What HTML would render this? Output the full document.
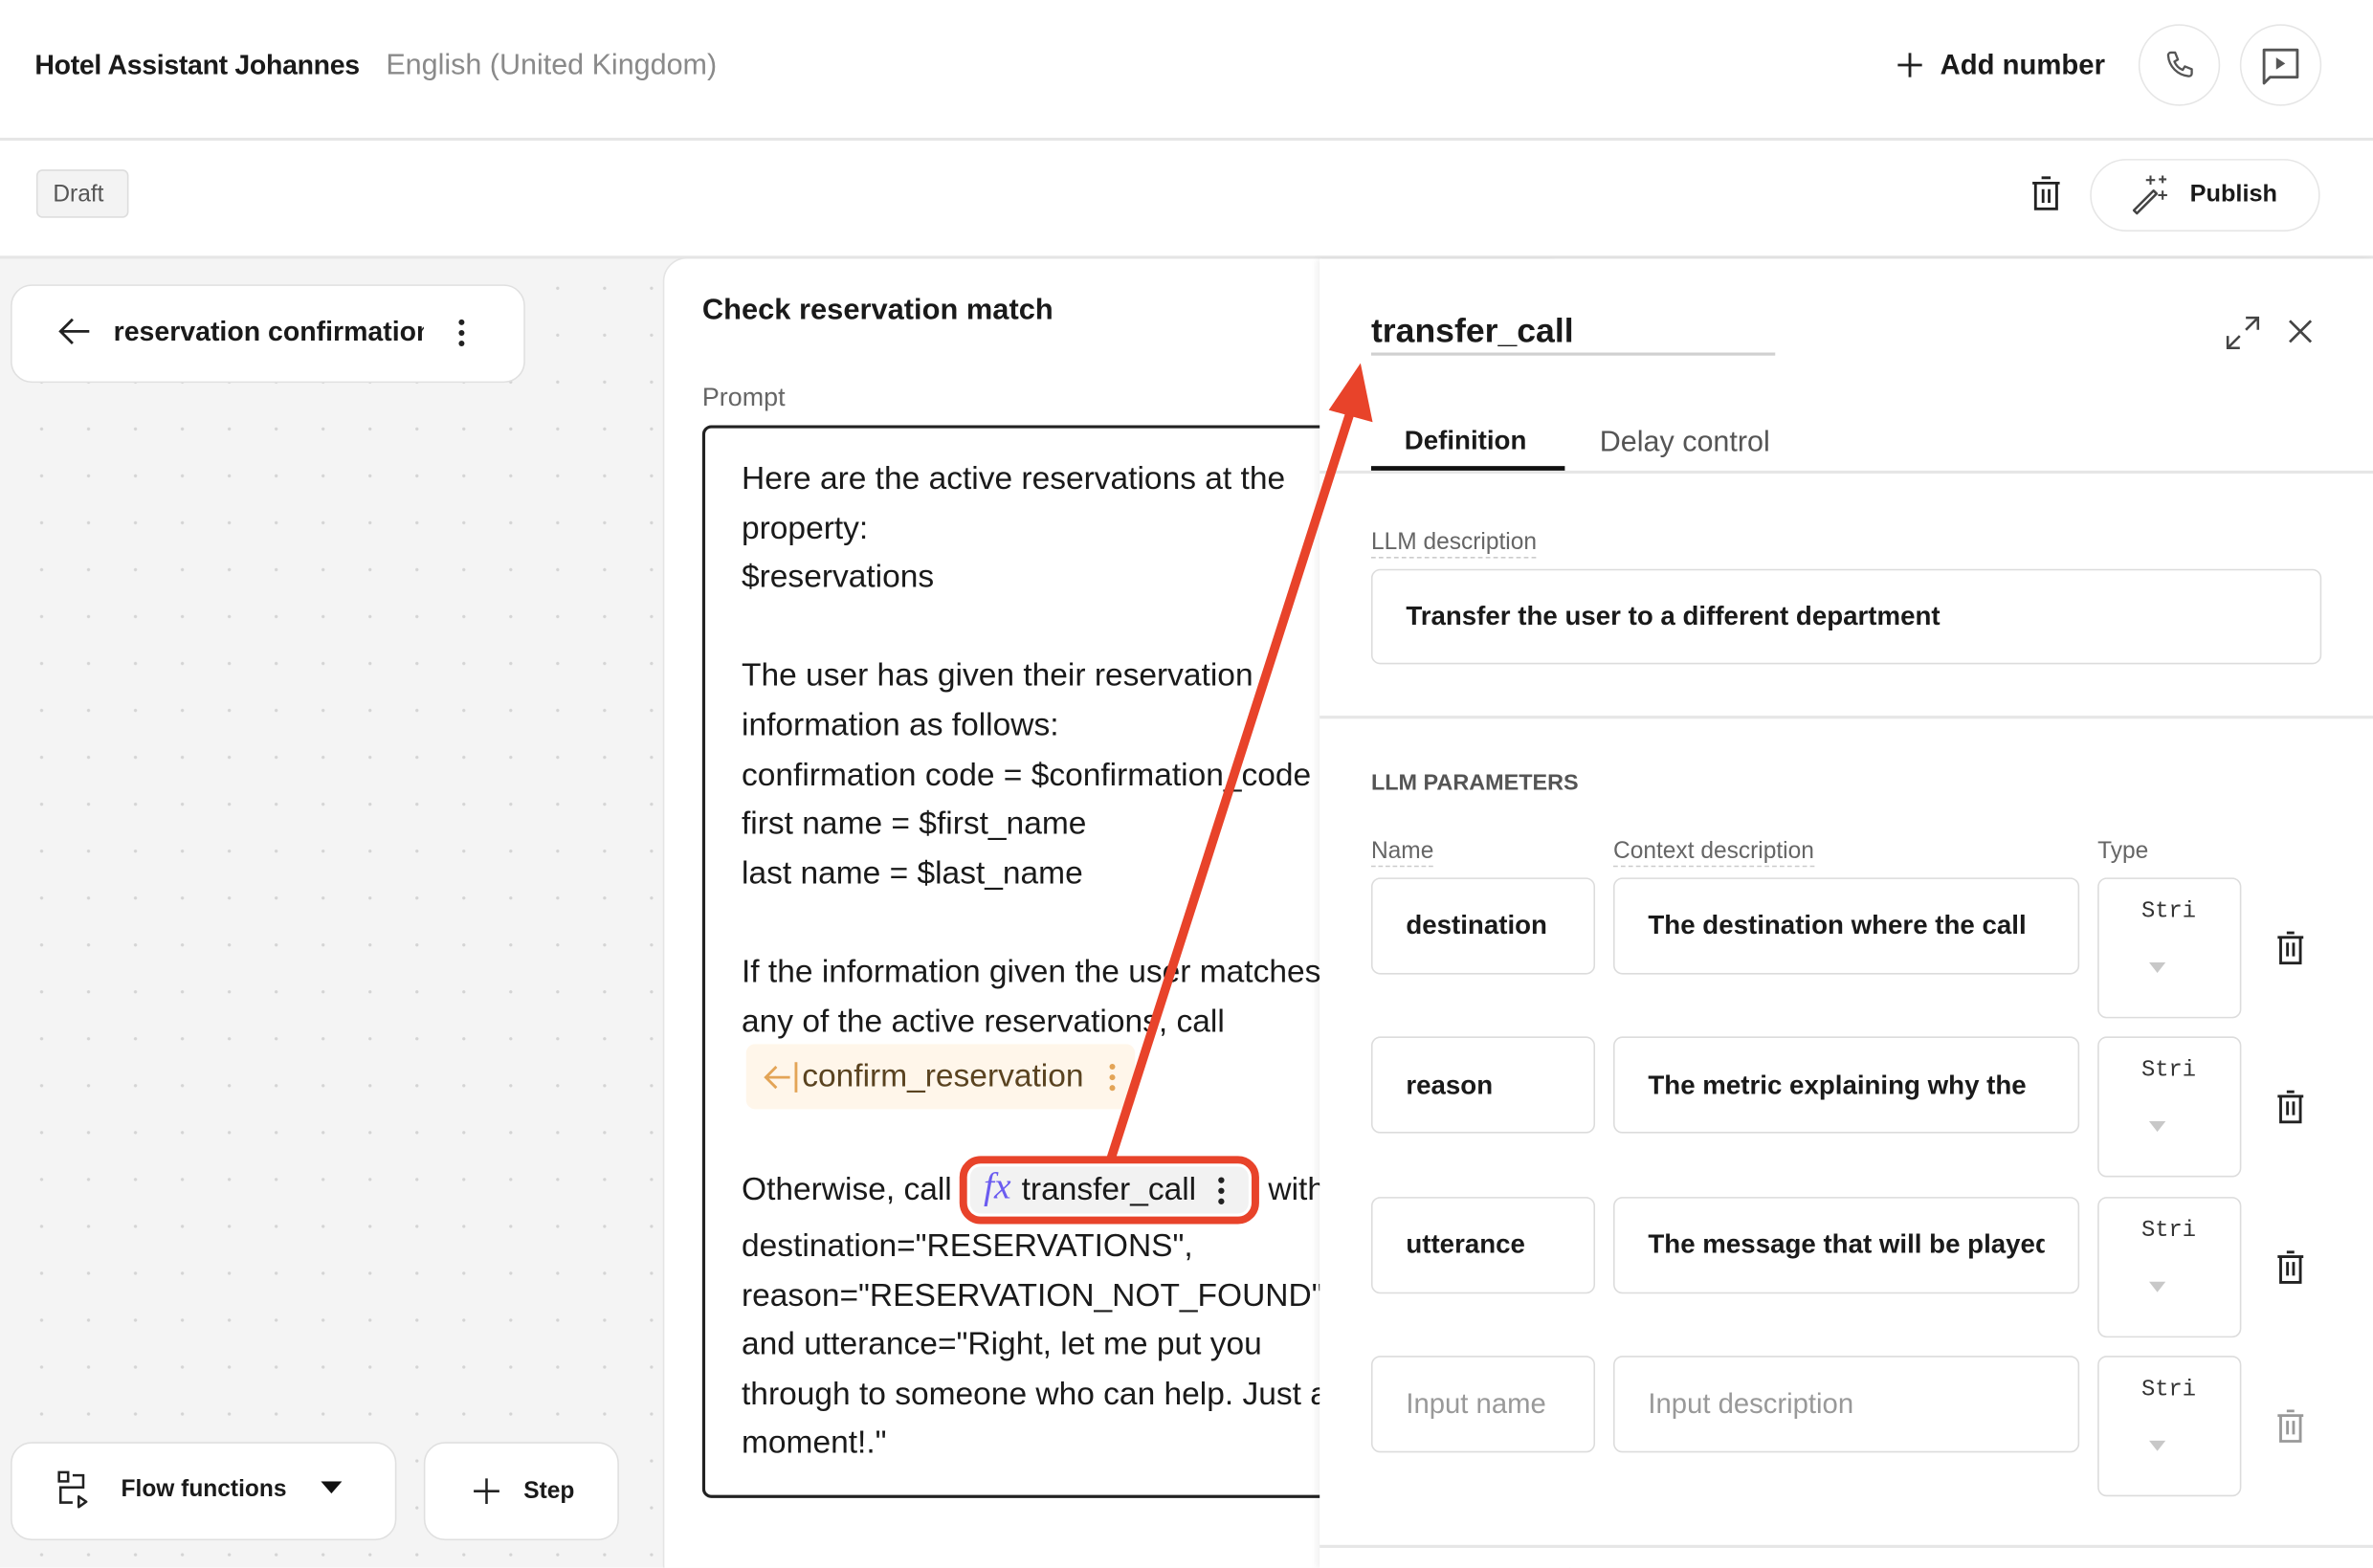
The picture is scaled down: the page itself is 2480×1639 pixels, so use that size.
<!DOCTYPE html>
<html><head><meta charset="utf-8"><style>
*{box-sizing:border-box;margin:0;padding:0}
html,body{width:2480px;height:1638px;overflow:hidden;background:#fff}
#w{position:absolute;left:0;top:0;width:1568px;height:1036px;transform:scale(1.58163);transform-origin:0 0;font-family:"Liberation Sans",sans-serif;color:#1a1a1a;overflow:hidden}
.a{position:absolute}
.t{position:absolute;white-space:nowrap;line-height:1}
.b{font-weight:bold}
.box{position:absolute;background:#fff;border:1.5px solid #dcdcdc;border-radius:6px}
.dash{border-bottom:1.5px dashed #ccc;padding-bottom:1px}
</style></head><body><div id="w">
<!-- header -->
<div class="t b" style="left:23px;top:34px;font-size:18px;letter-spacing:-0.2px">Hotel Assistant Johannes</div>
<div class="t" style="left:255px;top:34px;font-size:19.3px;color:#8a8a8a">English (United Kingdom)</div>
<svg class="a" style="left:1253px;top:34px" width="18" height="18" viewBox="0 0 18 18"><path d="M9 1v16M1 9h16" stroke="#222" stroke-width="1.8"/></svg>
<div class="t b" style="left:1282px;top:34px;font-size:18.5px">Add number</div>
<div class="a" style="left:1413px;top:16px;width:54px;height:54px;border:1.5px solid #e6e6e6;border-radius:50%"></div>
<svg class="a" style="left:1429px;top:32px" width="22" height="22" viewBox="0 0 24 24"><path d="M6 3l3 0 2 5-2.5 1.5a11 11 0 0 0 6 6L16 13l5 2v3a2 2 0 0 1-2 2A16 16 0 0 1 4 5a2 2 0 0 1 2-2z" fill="none" stroke="#555" stroke-width="1.6" stroke-linejoin="round"/></svg>
<div class="a" style="left:1480px;top:16px;width:54px;height:54px;border:1.5px solid #e6e6e6;border-radius:50%"></div>
<svg class="a" style="left:1494px;top:31px" width="26" height="26" viewBox="0 0 26 26"><path d="M2 2h22v18H6l-4 4z" fill="none" stroke="#555" stroke-width="1.8" stroke-linejoin="round"/><path d="M10 7l6 4-6 4z" fill="#555"/></svg>
<div class="a" style="left:0;top:91px;width:1568px;height:1.5px;background:#e6e6e6"></div>
<!-- toolbar -->
<div class="a" style="left:24px;top:112px;width:61px;height:32px;background:#f3f3f3;border:1.5px solid #ddd;border-radius:4px"></div>
<div class="t" style="left:35px;top:121px;font-size:15.5px;color:#555">Draft</div>
<svg class="a" style="left:1341px;top:116px" width="22" height="24" viewBox="0 0 22 24"><path d="M8 1.5h6M2 5h18M4 5v17h14V5M9 9v9M13 9v9" fill="none" stroke="#222" stroke-width="1.8"/></svg>
<div class="a" style="left:1381px;top:105px;width:152px;height:48px;border:1.5px solid #e6e6e6;border-radius:24px"></div>
<svg class="a" style="left:1407px;top:114px" width="28" height="28" viewBox="0 0 28 28"><path d="M3 25l13-13 2 2L5 27z" fill="none" stroke="#444" stroke-width="1.6" stroke-linejoin="round"/><path d="M14 2v6M11 5h6M22 2v5M19.5 4.5h5M22 12v6M19 15h6" stroke="#444" stroke-width="1.3"/></svg>
<div class="t b" style="left:1447px;top:121px;font-size:16px">Publish</div>
<div class="a" style="left:0;top:169px;width:1568px;height:1.5px;background:#e6e6e6"></div>
<!-- canvas -->
<div class="a" style="left:0;top:170.5px;width:872px;height:866px;background-color:#f4f4f4;background-image:radial-gradient(circle,#d4d4d4 0.9px,transparent 1.2px);background-size:31px 31px;background-position:12px 4px"></div>
<div class="a" style="left:7px;top:188px;width:340px;height:65px;background:#fff;border:1.5px solid #e0e0e0;border-radius:14px"></div>
<svg class="a" style="left:38px;top:209px" width="22" height="20" viewBox="0 0 22 20"><path d="M21 10H2M10 2L2 10l8 8" fill="none" stroke="#222" stroke-width="1.8"/></svg>
<div class="t b" style="left:75px;top:210px;width:205px;overflow:hidden;font-size:18px">reservation confirmation</div>
<svg class="a" style="left:301px;top:210px" width="8" height="20"><circle cx="4" cy="3" r="1.9" fill="#222"/><circle cx="4" cy="10" r="1.9" fill="#222"/><circle cx="4" cy="17" r="1.9" fill="#222"/></svg>
<div class="a" style="left:7px;top:953px;width:255px;height:65px;background:#fff;border:1.5px solid #e0e0e0;border-radius:14px"></div>
<svg class="a" style="left:37px;top:971px" width="24" height="26" viewBox="0 0 24 26"><rect x="2" y="2" width="6" height="6" fill="none" stroke="#222" stroke-width="1.6"/><path d="M11 4h7v8H3v10h8" fill="none" stroke="#222" stroke-width="1.6"/><path d="M15 18v7l5-3.5z" fill="none" stroke="#222" stroke-width="1.6" stroke-linejoin="round"/></svg>
<div class="t b" style="left:80px;top:977px;font-size:15.5px">Flow functions</div>
<svg class="a" style="left:212px;top:979px" width="14" height="9"><path d="M0 0h14L7 8z" fill="#111"/></svg>
<div class="a" style="left:280px;top:953px;width:129px;height:65px;background:#fff;border:1.5px solid #e0e0e0;border-radius:14px"></div>
<svg class="a" style="left:313px;top:977px" width="17" height="17" viewBox="0 0 17 17"><path d="M8.5 0v17M0 8.5h17" stroke="#222" stroke-width="1.6"/></svg>
<div class="t b" style="left:346px;top:978px;font-size:15.5px">Step</div>
<!-- middle card -->
<div class="a" style="left:438px;top:170px;width:600px;height:880px;background:#fff;border:1.5px solid #e4e4e4;border-radius:16px"></div>
<div class="t b" style="left:464px;top:196px;font-size:19.5px">Check reservation match</div>
<div class="t" style="left:464px;top:254px;font-size:17px;color:#666">Prompt</div>
<div class="a" style="left:464px;top:281px;width:600px;height:709px;border:2px solid #222;border-radius:6px"></div>
<div class="a" style="left:490px;top:301px;font-size:21.2px;line-height:32.6px;color:#1a1a1a;white-space:nowrap">
Here are the active reservations at the<br>property:<br>$reservations<br><br>The user has given their reservation<br>information as follows:<br>confirmation code = $confirmation_code<br>first name = $first_name<br>last name = $last_name<br><br>If the information given the user matches<br>any of the active reservations, call</div>
<div class="a" style="left:493px;top:690px;width:257px;height:43px;background:#fff6ea;border-radius:6px"></div>
<svg class="a" style="left:504px;top:701px" width="24" height="22" viewBox="0 0 24 22"><path d="M18 11H3M9 4L2 11l7 7" fill="none" stroke="#e3a456" stroke-width="1.8"/><path d="M22 1v20" stroke="#e3a456" stroke-width="1.8"/></svg>
<div class="t" style="left:530px;top:701px;font-size:21.2px;color:#5a4320">confirm_reservation</div>
<svg class="a" style="left:731px;top:702px" width="8" height="20"><circle cx="4" cy="3" r="1.9" fill="#e3a456"/><circle cx="4" cy="10" r="1.9" fill="#e3a456"/><circle cx="4" cy="17" r="1.9" fill="#e3a456"/></svg>
<div class="t" style="left:490px;top:776px;font-size:21.2px">Otherwise, call</div>
<div class="a" style="left:634px;top:764px;width:198px;height:45px;border:5px solid #e8432a;border-radius:14px;background:#f2f2f2;box-shadow:inset 0 0 0 2px #fff"></div>
<div class="t" style="left:650px;top:772px;font-size:25px;font-style:italic;font-family:'Liberation Serif',serif;color:#6b5cf0">fx</div>
<div class="t" style="left:675px;top:776px;font-size:21.2px">transfer_call</div>
<svg class="a" style="left:803px;top:777px" width="8" height="20"><circle cx="4" cy="3" r="2" fill="#222"/><circle cx="4" cy="10" r="2" fill="#222"/><circle cx="4" cy="17" r="2" fill="#222"/></svg>
<div class="t" style="left:838px;top:776px;font-size:21.2px">with</div>
<div class="a" style="left:490px;top:808px;font-size:21.2px;line-height:32.6px;white-space:nowrap">destination="RESERVATIONS",<br>reason="RESERVATION_NOT_FOUND",<br>and utterance="Right, let me put you<br>through to someone who can help. Just a<br>moment!."</div>
<!-- right panel -->
<div class="a" style="left:872px;top:170.5px;width:696px;height:866px;background:#fff;box-shadow:-2px 0 4px rgba(0,0,0,0.06)"></div>
<div class="t b" style="left:906px;top:208px;font-size:22.5px">transfer_call</div>
<div class="a" style="left:906px;top:233px;width:267px;height:1.5px;background:#d0d0d0"></div>
<svg class="a" style="left:1470px;top:208px" width="24" height="24" viewBox="0 0 24 24"><path d="M14 2h8v8M22 2l-8 8M10 22H2v-8M2 22l8-8" fill="none" stroke="#444" stroke-width="1.6"/></svg>
<svg class="a" style="left:1512px;top:211px" width="16" height="16" viewBox="0 0 16 16"><path d="M1 1l14 14M15 1L1 15" stroke="#444" stroke-width="1.7"/></svg>
<div class="t b" style="left:928px;top:283px;font-size:17.5px">Definition</div>
<div class="t" style="left:1057px;top:283px;font-size:19.3px;color:#555">Delay control</div>
<div class="a" style="left:872px;top:311px;width:696px;height:1.5px;background:#e6e6e6"></div>
<div class="a" style="left:906px;top:308px;width:128px;height:3px;background:#111"></div>
<div class="t dash" style="left:906px;top:351px;font-size:15.5px;color:#666">LLM description</div>
<div class="box" style="left:906px;top:376px;width:628px;height:63px"></div>
<div class="t b" style="left:929px;top:399px;font-size:17.5px">Transfer the user to a different department</div>
<div class="a" style="left:872px;top:473px;width:696px;height:1.5px;background:#e6e6e6"></div>
<div class="t" style="left:906px;top:511px;font-size:14.8px;font-weight:bold;color:#555">LLM PARAMETERS</div>
<div class="t dash" style="left:906px;top:555px;font-size:15.5px;color:#666">Name</div>
<div class="t dash" style="left:1066px;top:555px;font-size:15.5px;color:#666">Context description</div>
<div class="t" style="left:1386px;top:555px;font-size:15.5px;color:#666">Type</div>

<div class="box" style="left:906px;top:580px;width:148px;height:64px"></div>
<div class="box" style="left:1066px;top:580px;width:308px;height:64px"></div>
<div class="box" style="left:1386px;top:580px;width:95px;height:93px"></div>
<div class="t b" style="left:929px;top:603px;font-size:17.5px">destination</div>
<div class="t b" style="left:1089px;top:603px;width:262px;overflow:hidden;font-size:17.5px">The destination where the call</div>

<div class="box" style="left:906px;top:685px;width:148px;height:64px"></div>
<div class="box" style="left:1066px;top:685px;width:308px;height:64px"></div>
<div class="box" style="left:1386px;top:685px;width:95px;height:93px"></div>
<div class="t b" style="left:929px;top:709px;font-size:17.5px">reason</div>
<div class="t b" style="left:1089px;top:709px;width:262px;overflow:hidden;font-size:17.5px">The metric explaining why the</div>

<div class="box" style="left:906px;top:791px;width:148px;height:64px"></div>
<div class="box" style="left:1066px;top:791px;width:308px;height:64px"></div>
<div class="box" style="left:1386px;top:791px;width:95px;height:93px"></div>
<div class="t b" style="left:929px;top:814px;font-size:17.5px">utterance</div>
<div class="t b" style="left:1089px;top:814px;width:262px;overflow:hidden;font-size:17.5px">The message that will be played</div>

<div class="box" style="left:906px;top:896px;width:148px;height:64px"></div>
<div class="box" style="left:1066px;top:896px;width:308px;height:64px"></div>
<div class="box" style="left:1386px;top:896px;width:95px;height:93px"></div>
<div class="t" style="left:929px;top:919px;font-size:18.5px;color:#999">Input name</div>
<div class="t" style="left:1089px;top:919px;font-size:18.5px;color:#999">Input description</div>

<div class="t" style="left:1415px;top:595px;font-size:15px;font-family:'Liberation Mono',monospace;color:#333">Stri</div>
<div class="t" style="left:1415px;top:700px;font-size:15px;font-family:'Liberation Mono',monospace;color:#333">Stri</div>
<div class="t" style="left:1415px;top:806px;font-size:15px;font-family:'Liberation Mono',monospace;color:#333">Stri</div>
<div class="t" style="left:1415px;top:911px;font-size:15px;font-family:'Liberation Mono',monospace;color:#333">Stri</div>
<svg class="a" style="left:1420px;top:636px" width="11" height="7"><path d="M0 0h11L5.5 7z" fill="#c8c8c8"/></svg>
<svg class="a" style="left:1420px;top:741px" width="11" height="7"><path d="M0 0h11L5.5 7z" fill="#c8c8c8"/></svg>
<svg class="a" style="left:1420px;top:847px" width="11" height="7"><path d="M0 0h11L5.5 7z" fill="#c8c8c8"/></svg>
<svg class="a" style="left:1420px;top:952px" width="11" height="7"><path d="M0 0h11L5.5 7z" fill="#c8c8c8"/></svg>
<svg class="a" style="left:1504px;top:615px" width="19" height="23" viewBox="0 0 19 23"><path d="M7 1.5h5M1 4.5h17M3 4.5v17h13v-17M7.5 8v9M11.5 8v9" fill="none" stroke="#222" stroke-width="1.8"/></svg>
<svg class="a" style="left:1504px;top:720px" width="19" height="23" viewBox="0 0 19 23"><path d="M7 1.5h5M1 4.5h17M3 4.5v17h13v-17M7.5 8v9M11.5 8v9" fill="none" stroke="#222" stroke-width="1.8"/></svg>
<svg class="a" style="left:1504px;top:826px" width="19" height="23" viewBox="0 0 19 23"><path d="M7 1.5h5M1 4.5h17M3 4.5v17h13v-17M7.5 8v9M11.5 8v9" fill="none" stroke="#222" stroke-width="1.8"/></svg>
<svg class="a" style="left:1504px;top:931px" width="19" height="23" viewBox="0 0 19 23"><path d="M7 1.5h5M1 4.5h17M3 4.5v17h13v-17M7.5 8v9M11.5 8v9" fill="none" stroke="#999" stroke-width="1.8"/></svg>
<div class="a" style="left:872px;top:1021px;width:696px;height:1.5px;background:#e6e6e6"></div>
<!-- red arrow -->
<svg class="a" style="left:0;top:0" width="1568" height="1036"><path d="M734 766L893 270" stroke="#e8432a" stroke-width="6" fill="none"/><path d="M899 240L878 271L907 279z" fill="#e8432a"/></svg>
</div></body></html>
